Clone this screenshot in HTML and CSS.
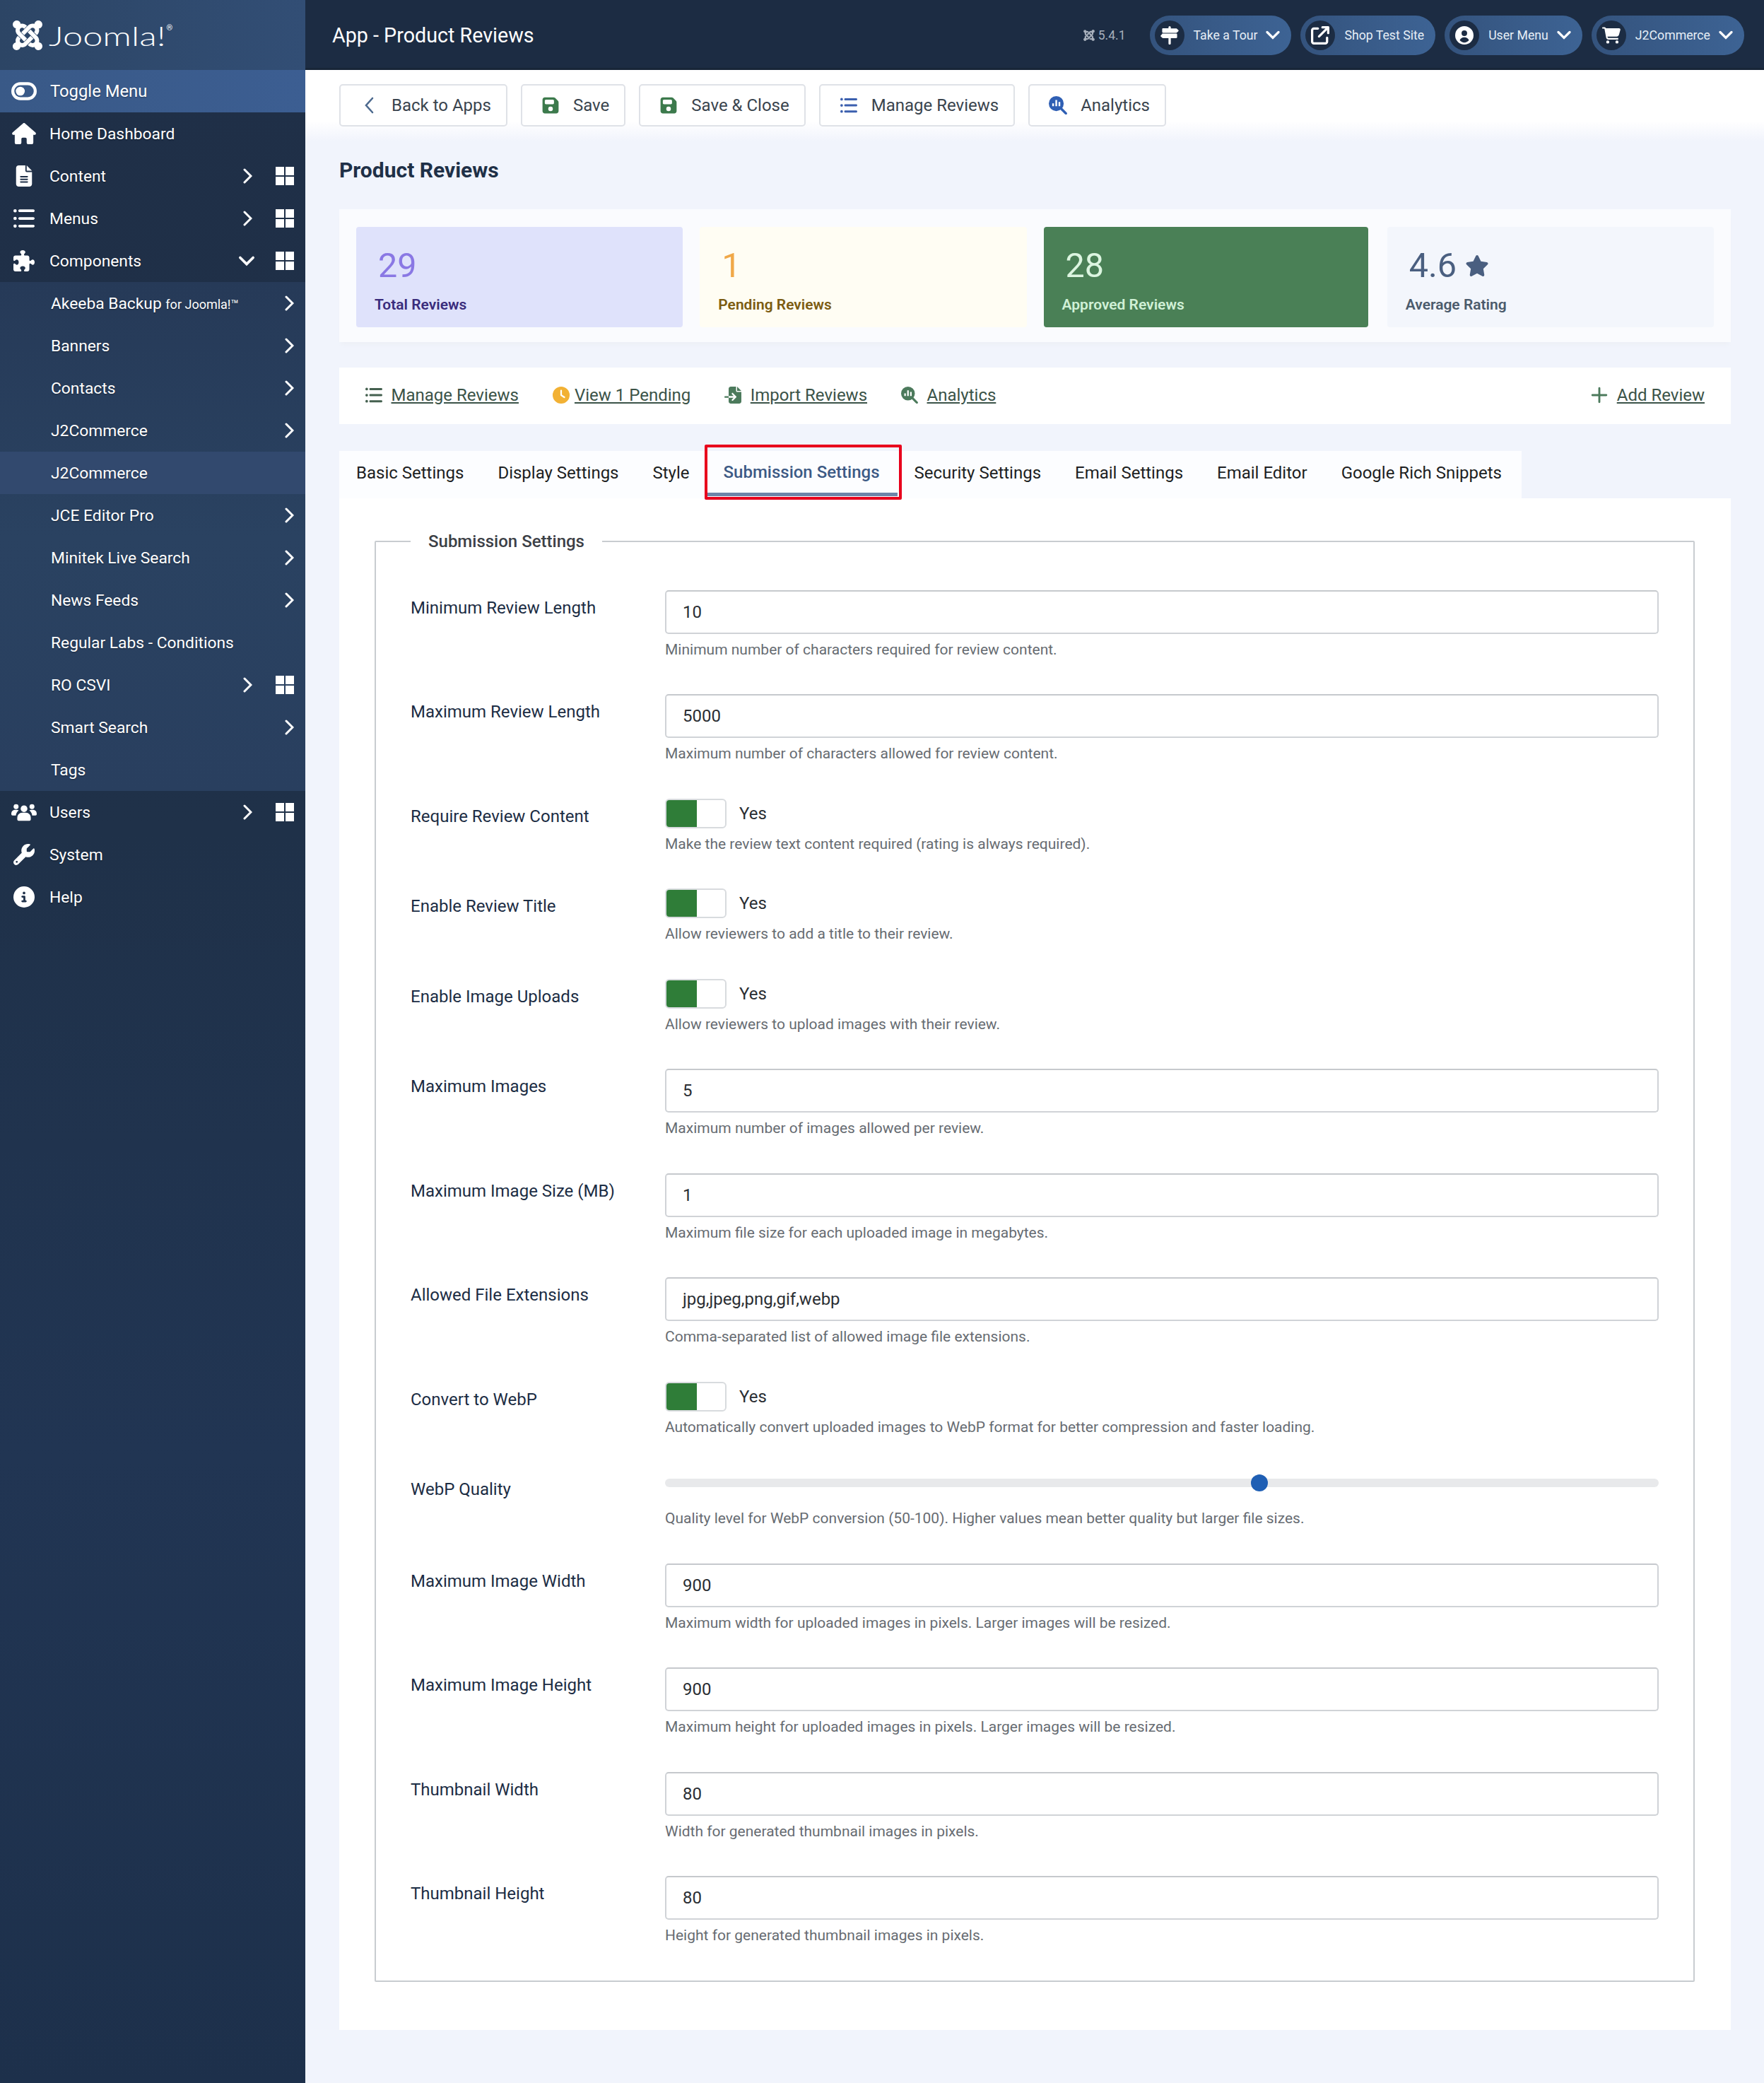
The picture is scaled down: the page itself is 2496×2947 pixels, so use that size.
FILE: index.html
```html
<!DOCTYPE html>
<html lang="en">
<head>
<meta charset="utf-8">
<title>App - Product Reviews</title>
<link rel="stylesheet" href="styles.css">
</head>
<body>
<svg class="sprite" xmlns="http://www.w3.org/2000/svg">
  <symbol id="joomla" viewBox="0 0 448 512"><path d="M.6 92.1C.6 58.8 27.4 32 60.4 32c30 0 54.5 21.9 59.2 50.2 32.6-7.6 67.1.6 96.5 30l-44.3 44.3c-20.5-20.5-42.6-16.3-55.4-3.5-14.3 14.3-14.3 37.9 0 52.2l99.5 99.5-44 44.3c-87.7-87.2-49.7-49.7-99.8-99.7-26.8-26.5-35-64.8-24.8-98.9C20.4 144.6.6 120.7.6 92.1zm129.5 116.4l44.3 44.3c10-10 89.7-89.7 99.7-99.8 14.3-14.3 37.6-14.3 51.9 0 12.8 12.8 17 35-3.5 55.4l44 44.3c31.2-31.2 38.5-67.6 28.9-101.2 29.2-4.1 51.9-29.2 51.9-59.5 0-33.2-26.8-60.1-59.8-60.1-30.3 0-55.4 22.5-59.5 51.6-33.8-9.9-71.7-1.5-98.3 25.1-18.3 19.1-71.1 71.5-99.6 99.9zm266.3 152.2c8.2-32.7-.9-68.5-26.3-93.9-11.8-12.2 5 4.7-99.5-99.7l-44.3 44.3 99.7 99.7c14.3 14.3 14.3 37.6 0 51.9-12.8 12.8-35 17-55.4-3.5l-44 44.3c27.6 30.2 68 38.8 102.7 28 5.5 27.4 29.7 48.1 58.9 48.1 33 0 59.8-26.8 59.8-60.1 0-30.2-22.5-55-51.6-59.1zm-84.3-53.1l-44-44.3c-87 86.4-50.4 50.4-99.7 99.8-14.3 14.3-37.6 14.3-51.9 0-13.1-13.4-16.9-35.3 3.2-55.4l-44-44.3c-30.2 30.2-38 65.2-29.5 98.3-26.7 6-46.8 29.9-46.8 58.2 0 33.2 26.8 60.1 59.8 60.1 28.6 0 52.5-19.8 58.2-46.7 32.7 8.2 68.5-.6 94-26 19.6-19.5 78.2-78.1 100.7-100.7z"/></symbol>
  <symbol id="house" viewBox="0 0 576 512"><path d="M575.8 255.5c0 18-15 32.1-32 32.1h-32l.7 160.2c0 2.7-.2 5.4-.5 8.1V472c0 22.1-17.9 40-40 40H456c-1.1 0-2.2 0-3.3-.1c-1.4 .1-2.8 .1-4.2 .1H416 392c-22.1 0-40-17.9-40-40V448 384c0-17.7-14.3-32-32-32H256c-17.7 0-32 14.3-32 32v64 24c0 22.1-17.9 40-40 40H160 128.1c-1.5 0-3-.1-4.5-.2c-1.2 .1-2.4 .2-3.6 .2H104c-22.1 0-40-17.9-40-40V360c0-.9 0-1.9 .1-2.8V287.6H32c-18 0-32-14-32-32.1c0-9 3-17 10-24L266.4 8c7-7 15-8 22-8s15 2 21 7L564.8 231.5c8 7 12 15 11 24z"/></symbol>
  <symbol id="file" viewBox="0 0 384 512"><path d="M64 0C28.7 0 0 28.7 0 64V448c0 35.3 28.7 64 64 64H320c35.3 0 64-28.7 64-64V160H256c-17.7 0-32-14.3-32-32V0H64zM256 0V128H384L256 0zM112 256H272c8.8 0 16 7.2 16 16s-7.2 16-16 16H112c-8.8 0-16-7.2-16-16s7.2-16 16-16zm0 64H272c8.8 0 16 7.2 16 16s-7.2 16-16 16H112c-8.8 0-16-7.2-16-16s7.2-16 16-16zm0 64H272c8.8 0 16 7.2 16 16s-7.2 16-16 16H112c-8.8 0-16-7.2-16-16s7.2-16 16-16z"/></symbol>
  <symbol id="list" viewBox="0 0 512 512"><path d="M0 72a40 40 0 1 1 80 0 40 40 0 1 1-80 0zM0 256a40 40 0 1 1 80 0 40 40 0 1 1-80 0zM0 440a40 40 0 1 1 80 0 40 40 0 1 1-80 0zM150 40H480c18 0 32 14 32 32s-14 32-32 32H150c-18 0-32-14-32-32s14-32 32-32zM150 224H480c18 0 32 14 32 32s-14 32-32 32H150c-18 0-32-14-32-32s14-32 32-32zM150 408H480c18 0 32 14 32 32s-14 32-32 32H150c-18 0-32-14-32-32s14-32 32-32z"/></symbol>
  <symbol id="puzzle" viewBox="0 0 512 512"><path d="M192 104.8c0-9.2-5.8-17.3-13.2-22.8C167.2 73.3 160 61.3 160 48c0-26.5 28.7-48 64-48s64 21.5 64 48c0 13.3-7.2 25.3-18.8 34c-7.4 5.5-13.2 13.6-13.2 22.8v0c0 12.8 10.4 23.2 23.2 23.2H336c26.5 0 48 21.5 48 48v56.8c0 12.8 10.4 23.2 23.2 23.2v0c9.2 0 17.3-5.8 22.8-13.2c8.7-11.6 20.7-18.8 34-18.8c26.5 0 48 28.7 48 64s-21.5 64-48 64c-13.3 0-25.3-7.2-34-18.8c-5.5-7.4-13.6-13.2-22.8-13.2v0c-12.8 0-23.2 10.4-23.2 23.2V464c0 26.5-21.5 48-48 48H279.2c-12.8 0-23.2-10.4-23.2-23.2v0c0-9.2 5.8-17.3 13.2-22.8c11.6-8.7 18.8-20.7 18.8-34c0-26.5-28.7-48-64-48s-64 21.5-64 48c0 13.3 7.2 25.3 18.8 34c7.4 5.5 13.2 13.6 13.2 22.8v0c0 12.8-10.4 23.2-23.2 23.2H48c-26.5 0-48-21.5-48-48V343.2C0 330.4 10.4 320 23.2 320v0c9.2 0 17.3 5.8 22.8 13.2C54.7 344.8 66.7 352 80 352c26.5 0 48-28.7 48-64s-21.5-64-48-64c-13.3 0-25.3 7.2-34 18.8C40.5 250.2 32.4 256 23.2 256v0C10.4 256 0 245.6 0 232.8V176c0-26.5 21.5-48 48-48H168.8c12.8 0 23.2-10.4 23.2-23.2v0z"/></symbol>
  <symbol id="users" viewBox="0 0 640 512"><circle cx="120" cy="120" r="62"/><circle cx="520" cy="120" r="62"/><circle cx="320" cy="170" r="84"/><path d="M150 400c0-80 60-130 120-130h100c60 0 120 50 120 130v40c0 18-14 32-32 32H182c-18 0-32-14-32-32z"/><path d="M0 300c0-60 40-100 90-100h50c16 0 32 4 46 12-40 30-66 76-70 128H32c-18 0-32-14-32-40zM640 300c0-60-40-100-90-100h-50c-16 0-32 4-46 12 40 30 66 76 70 128h84c18 0 32-14 32-40z"/></symbol>
  <symbol id="wrench" viewBox="0 0 512 512"><path d="M352 320c88.4 0 160-71.6 160-160c0-15.3-2.2-30.1-6.2-44.2c-3.1-10.8-16.4-13.2-24.3-5.3l-76.8 76.8c-3 3-7.1 4.7-11.3 4.7H336c-8.8 0-16-7.2-16-16V118.6c0-4.2 1.7-8.3 4.7-11.3l76.8-76.8c7.9-7.9 5.4-21.2-5.3-24.3C382.1 2.2 367.3 0 352 0C263.6 0 192 71.6 192 160c0 19.1 3.4 37.5 9.5 54.5L19.9 396.1C7.2 408.8 0 426.1 0 444.1C0 481.6 30.4 512 67.9 512c18 0 35.3-7.2 48-19.9L297.5 310.5c17 6.2 35.4 9.5 54.5 9.5zM80 408a24 24 0 1 1 0 48 24 24 0 1 1 0-48z"/></symbol>
  <symbol id="info" viewBox="0 0 512 512"><path d="M256 512A256 256 0 1 0 256 0a256 256 0 1 0 0 512zM216 336h24V272H216c-13.3 0-24-10.7-24-24s10.7-24 24-24h48c13.3 0 24 10.7 24 24v88h8c13.3 0 24 10.7 24 24s-10.7 24-24 24H216c-13.3 0-24-10.7-24-24s10.7-24 24-24zm40-208a32 32 0 1 1 0 64 32 32 0 1 1 0-64z"/></symbol>
  <symbol id="star" viewBox="0 0 576 512"><path d="M316.9 18C311.6 7 300.4 0 288.1 0s-23.4 7-28.8 18L195 150.3 51.4 171.5c-12 1.8-22 10.2-25.7 21.7s-.7 24.2 7.9 32.7L137.8 329 113.2 474.7c-2 12 3 24.2 12.9 31.3s23 8 33.8 2.3l128.3-68.5 128.3 68.5c10.8 5.7 23.9 4.9 33.8-2.3s14.9-19.3 12.9-31.3L438.5 329 542.7 225.9c8.6-8.5 11.7-21.2 7.9-32.7s-13.7-19.9-25.7-21.7L381.2 150.3 316.9 18z"/></symbol>
  <symbol id="save" viewBox="0 0 448 512"><path d="M64 32C28.7 32 0 60.7 0 96V416c0 35.3 28.7 64 64 64H384c35.3 0 64-28.7 64-64V173.3c0-17-6.7-33.3-18.7-45.3L352 50.7C340 38.7 323.7 32 306.7 32H64zm0 96c0-17.7 14.3-32 32-32H288c17.7 0 32 14.3 32 32v64c0 17.7-14.3 32-32 32H96c-17.7 0-32-14.3-32-32V128zM224 288a64 64 0 1 1 0 128 64 64 0 1 1 0-128z"/></symbol>
  <symbol id="chart" viewBox="0 0 512 512"><path fill-rule="evenodd" d="M208 0a208 208 0 1 1 0 416 208 208 0 1 1 0-416zM96 200v80h48v-80zM184 110v170h48V110zM272 160v120h48V160z"/><path d="M350 306l150 150c14 14 14 36 0 50s-36 10-50-4L300 352z"/></symbol>
  <symbol id="clock" viewBox="0 0 512 512"><path d="M256 0a256 256 0 1 1 0 512A256 256 0 1 1 256 0zM232 120V256c0 8 4 15.500 10.700 20l96 64c11 7.400 26 4.400 33.300-6.700s4.400-26-6.700-33.300L280 243V120c0-13.300-10.700-24-24-24s-24 10.700-24 24z"/></symbol>
  <symbol id="import" viewBox="0 0 512 512"><path d="M128 64c0-35 29-64 64-64h160v128c0 18 14 32 32 32h128v288c0 35-29 64-64 64H192c-35 0-64-29-64-64V336h150l-52 52c-9 9-9 25 0 34s25 9 34 0l96-96c9-9 9-25 0-34l-96-96c-9-9-25-9-34 0s-9 25 0 34l52 52H128zM384 0l128 128H384zM24 288h104v48H24c-13 0-24-11-24-24s11-24 24-24z"/></symbol>
  <symbol id="signs" viewBox="0 0 512 512"><path d="M224 32c0-18 14-32 32-32s32 14 32 32v32h150c8 0 16 3 22 9l42 42c6 6 6 16 0 22l-42 42c-6 6-14 9-22 9H72c-13 0-24-11-24-24v-80c0-13 11-24 24-24h152zM40 208h400c13 0 24 11 24 24v80c0 13-11 24-24 24H288v144c0 18-14 32-32 32s-32-14-32-32V336H72c-8 0-16-3-22-9L8 285c-6-6-6-16 0-22l42-46c-3-3-6-9-10-9z"/></symbol>
  <symbol id="external" viewBox="0 0 512 512"><path d="M320 0c-18 0-32 14-32 32s14 32 32 32h82L201 265c-12 12-12 33 0 45s33 12 45 0l202-201v82c0 18 14 32 32 32s32-14 32-32V32c0-18-14-32-32-32zM80 32C36 32 0 68 0 112v320c0 44 36 80 80 80h320c44 0 80-36 80-80V320c0-18-14-32-32-32s-32 14-32 32v112c0 9-7 16-16 16H80c-9 0-16-7-16-16V112c0-9 7-16 16-16h112c18 0 32-14 32-32s-14-32-32-32z"/></symbol>
  <symbol id="user" viewBox="0 0 512 512"><path fill-rule="evenodd" d="M256 0a256 256 0 1 1 0 512A256 256 0 1 1 256 0zM256 120a78 78 0 1 0 0 156 78 78 0 1 0 0-156zM256 310c-62 0-112 34-128 84 32 38 78 62 128 62s96-24 128-62c-16-50-66-84-128-84z"/></symbol>
  <symbol id="cart" viewBox="0 0 576 512"><path d="M0 24C0 11 11 0 24 0h45c22 0 41 12 51 32h411c26 0 46 25 39 51l-41 152c-9 35-40 57-75 57H167l5 29c2 11 12 19 24 19h288c13 0 24 11 24 24s-11 24-24 24H196c-35 0-65-25-71-59L73 53c-1-3-3-5-6-5H24C11 48 0 37 0 24zM128 464a48 48 0 1 1 96 0 48 48 0 1 1-96 0zM416 464a48 48 0 1 1 96 0 48 48 0 1 1-96 0z"/></symbol>
  <symbol id="grid" viewBox="0 0 26 26"><rect width="12" height="12"/><rect x="14" width="12" height="12"/><rect y="14" width="12" height="12"/><rect x="14" y="14" width="12" height="12"/></symbol>
  <symbol id="toggle" viewBox="0 0 34 24"><path fill-rule="evenodd" d="M12 0h10a12 12 0 0 1 0 24H12A12 12 0 0 1 12 0zM12 4a8 8 0 0 0 0 16h10a8 8 0 0 0 0-16z"/><circle cx="12" cy="12" r="6"/></symbol>
  <symbol id="chev-r" viewBox="0 0 14 22"><path d="M3 2l9 9-9 9" fill="none" stroke="currentColor" stroke-width="3" stroke-linecap="round"/></symbol>
  <symbol id="chev-l" viewBox="0 0 14 24"><path d="M12 2L3 12l9 10" fill="none" stroke="currentColor" stroke-width="2.600" stroke-linecap="round"/></symbol>
  <symbol id="chev-d" viewBox="0 0 20 14"><path d="M2 3l8 8 8-8" fill="none" stroke="currentColor" stroke-width="3.200" stroke-linecap="round"/></symbol>
  <symbol id="plus" viewBox="0 0 22 22"><path d="M11 2v18M2 11h18" fill="none" stroke="currentColor" stroke-width="2.600" stroke-linecap="round"/></symbol>
</svg>

<div class="app">
  <aside class="sidebar">
    <div class="brand">
      <svg class="brand-mark"><use href="#joomla"/></svg>
      <span class="brand-name">Joomla!</span><sup class="brand-reg">®</sup>
    </div>
    <nav class="nav">
      <a class="nav-item nav-toggle"><svg class="nav-icon"><use href="#toggle"/></svg><span>Toggle Menu</span></a>
      <a class="nav-item"><svg class="nav-icon"><use href="#house"/></svg><span>Home Dashboard</span></a>
      <a class="nav-item"><svg class="nav-icon"><use href="#file"/></svg><span>Content</span><svg class="chev"><use href="#chev-r"/></svg><svg class="grid"><use href="#grid"/></svg></a>
      <a class="nav-item"><svg class="nav-icon"><use href="#list"/></svg><span>Menus</span><svg class="chev"><use href="#chev-r"/></svg><svg class="grid"><use href="#grid"/></svg></a>
      <a class="nav-item"><svg class="nav-icon"><use href="#puzzle"/></svg><span>Components</span><svg class="chev-down"><use href="#chev-d"/></svg><svg class="grid"><use href="#grid"/></svg></a>
      <div class="subnav">
        <a class="sub-item"><span>Akeeba Backup <small class="tiny">for Joomla!™</small></span><svg class="chev"><use href="#chev-r"/></svg></a>
        <a class="sub-item"><span>Banners</span><svg class="chev"><use href="#chev-r"/></svg></a>
        <a class="sub-item"><span>Contacts</span><svg class="chev"><use href="#chev-r"/></svg></a>
        <a class="sub-item"><span>J2Commerce</span><svg class="chev"><use href="#chev-r"/></svg></a>
        <a class="sub-item sub-active"><span>J2Commerce</span></a>
        <a class="sub-item"><span>JCE Editor Pro</span><svg class="chev"><use href="#chev-r"/></svg></a>
        <a class="sub-item"><span>Minitek Live Search</span><svg class="chev"><use href="#chev-r"/></svg></a>
        <a class="sub-item"><span>News Feeds</span><svg class="chev"><use href="#chev-r"/></svg></a>
        <a class="sub-item"><span>Regular Labs - Conditions</span></a>
        <a class="sub-item"><span>RO CSVI</span><svg class="chev"><use href="#chev-r"/></svg><svg class="grid"><use href="#grid"/></svg></a>
        <a class="sub-item"><span>Smart Search</span><svg class="chev"><use href="#chev-r"/></svg></a>
        <a class="sub-item"><span>Tags</span></a>
      </div>
      <a class="nav-item"><svg class="nav-icon"><use href="#users"/></svg><span>Users</span><svg class="chev"><use href="#chev-r"/></svg><svg class="grid"><use href="#grid"/></svg></a>
      <a class="nav-item"><svg class="nav-icon"><use href="#wrench"/></svg><span>System</span></a>
      <a class="nav-item"><svg class="nav-icon"><use href="#info"/></svg><span>Help</span></a>
    </nav>
  </aside>

  <div class="main">
    <header class="topbar">
      <h1 class="page-title">App - Product Reviews</h1>
      <div class="version"><svg class="version-mark"><use href="#joomla"/></svg>5.4.1</div>
      <div class="pills">
        <a class="pill"><span class="pill-icon"><svg><use href="#signs"/></svg></span><span>Take a Tour</span><svg class="pill-chev"><use href="#chev-d"/></svg></a>
        <a class="pill"><span class="pill-icon"><svg><use href="#external"/></svg></span><span>Shop Test Site</span></a>
        <a class="pill"><span class="pill-icon"><svg><use href="#user"/></svg></span><span>User Menu</span><svg class="pill-chev"><use href="#chev-d"/></svg></a>
        <a class="pill"><span class="pill-icon"><svg><use href="#cart"/></svg></span><span>J2Commerce</span><svg class="pill-chev"><use href="#chev-d"/></svg></a>
      </div>
    </header>

    <div class="toolbar">
      <a class="btn"><span class="btn-icon"><svg class="ico-back"><use href="#chev-l"/></svg></span>Back to Apps</a>
      <a class="btn"><span class="btn-icon"><svg class="ico-save"><use href="#save"/></svg></span>Save</a>
      <a class="btn"><span class="btn-icon"><svg class="ico-save"><use href="#save"/></svg></span>Save &amp; Close</a>
      <a class="btn"><span class="btn-icon"><svg class="ico-list"><use href="#list"/></svg></span>Manage Reviews</a>
      <a class="btn"><span class="btn-icon"><svg class="ico-chart"><use href="#chart"/></svg></span>Analytics</a>
    </div>

    <main class="content">
      <h2 class="section-title">Product Reviews</h2>

      <section class="stats">
        <div class="stat stat-total"><div class="stat-num">29</div><div class="stat-label">Total Reviews</div></div>
        <div class="stat stat-pending"><div class="stat-num">1</div><div class="stat-label">Pending Reviews</div></div>
        <div class="stat stat-approved"><div class="stat-num">28</div><div class="stat-label">Approved Reviews</div></div>
        <div class="stat stat-rating"><div class="stat-num">4.6 <svg class="stat-star"><use href="#star"/></svg></div><div class="stat-label">Average Rating</div></div>
      </section>

      <div class="linkbar">
        <a class="link"><svg class="link-ico ico-slate"><use href="#list"/></svg><u>Manage Reviews</u></a>
        <a class="link link-tight"><svg class="link-ico ico-amber"><use href="#clock"/></svg><u>View 1 Pending</u></a>
        <a class="link"><svg class="link-ico ico-green"><use href="#import"/></svg><u>Import Reviews</u></a>
        <a class="link"><svg class="link-ico ico-green"><use href="#chart"/></svg><u>Analytics</u></a>
        <a class="link link-add"><svg class="link-ico ico-green"><use href="#plus"/></svg><u>Add Review</u></a>
      </div>

      <div class="tabs">
        <a class="tab">Basic Settings</a>
        <a class="tab">Display Settings</a>
        <a class="tab">Style</a>
        <a class="tab tab-active">Submission Settings</a>
        <a class="tab">Security Settings</a>
        <a class="tab">Email Settings</a>
        <a class="tab">Email Editor</a>
        <a class="tab">Google Rich Snippets</a>
      </div>

      <section class="panel">
        <fieldset class="group">
          <legend class="group-title">Submission Settings</legend>

          <div class="row"><div class="row-label">Minimum Review Length</div><div class="row-field"><div class="input">10</div><div class="help">Minimum number of characters required for review content.</div></div></div>
          <div class="row"><div class="row-label">Maximum Review Length</div><div class="row-field"><div class="input">5000</div><div class="help">Maximum number of characters allowed for review content.</div></div></div>
          <div class="row"><div class="row-label">Require Review Content</div><div class="row-field"><div class="switch-wrap"><span class="switch"><span class="switch-on"></span></span>Yes</div><div class="help">Make the review text content required (rating is always required).</div></div></div>
          <div class="row"><div class="row-label">Enable Review Title</div><div class="row-field"><div class="switch-wrap"><span class="switch"><span class="switch-on"></span></span>Yes</div><div class="help">Allow reviewers to add a title to their review.</div></div></div>
          <div class="row"><div class="row-label">Enable Image Uploads</div><div class="row-field"><div class="switch-wrap"><span class="switch"><span class="switch-on"></span></span>Yes</div><div class="help">Allow reviewers to upload images with their review.</div></div></div>
          <div class="row"><div class="row-label">Maximum Images</div><div class="row-field"><div class="input">5</div><div class="help">Maximum number of images allowed per review.</div></div></div>
          <div class="row"><div class="row-label">Maximum Image Size (MB)</div><div class="row-field"><div class="input">1</div><div class="help">Maximum file size for each uploaded image in megabytes.</div></div></div>
          <div class="row"><div class="row-label">Allowed File Extensions</div><div class="row-field"><div class="input">jpg,jpeg,png,gif,webp</div><div class="help">Comma-separated list of allowed image file extensions.</div></div></div>
          <div class="row"><div class="row-label">Convert to WebP</div><div class="row-field"><div class="switch-wrap"><span class="switch"><span class="switch-on"></span></span>Yes</div><div class="help">Automatically convert uploaded images to WebP format for better compression and faster loading.</div></div></div>
          <div class="row"><div class="row-label">WebP Quality</div><div class="row-field"><div class="slider"><div class="slider-track"><span class="slider-pos" style="width:60%"></span><span class="slider-thumb"></span></div></div><div class="help">Quality level for WebP conversion (50-100). Higher values mean better quality but larger file sizes.</div></div></div>
          <div class="row"><div class="row-label">Maximum Image Width</div><div class="row-field"><div class="input">900</div><div class="help">Maximum width for uploaded images in pixels. Larger images will be resized.</div></div></div>
          <div class="row"><div class="row-label">Maximum Image Height</div><div class="row-field"><div class="input">900</div><div class="help">Maximum height for uploaded images in pixels. Larger images will be resized.</div></div></div>
          <div class="row"><div class="row-label">Thumbnail Width</div><div class="row-field"><div class="input">80</div><div class="help">Width for generated thumbnail images in pixels.</div></div></div>
          <div class="row"><div class="row-label">Thumbnail Height</div><div class="row-field"><div class="input">80</div><div class="help">Height for generated thumbnail images in pixels.</div></div></div>
        </fieldset>
      </section>
    </main>
  </div>
</div>
</body>
</html>
```

FILE: styles.css
```css
* { box-sizing: border-box; }
html, body { margin: 0; padding: 0; }
body {
  font-family: Roboto, "Liberation Sans", sans-serif;
  font-size: 24px;
  color: #1c2d44;
  background: #f1f4fc;
  overflow: hidden;
}
.sprite { position: absolute; width: 0; height: 0; }
a { color: inherit; text-decoration: none; }
svg { fill: currentColor; display: block; }

.app { display: flex; height: 2947px; }

/* Sidebar */
.sidebar {
  width: 432px;
  flex: none;
  color: #fff;
  background: linear-gradient(180deg, #1f2f47 0, #1f3149 40%, #213553 70%, #1d304b 100%);
}
.brand {
  height: 99px;
  display: flex;
  align-items: center;
  padding-left: 16px;
  background: linear-gradient(90deg, #2c4565, #324e75);
}
.brand-mark { width: 46px; height: 48px; }
.brand-name {
  display: inline-block;
  font-family: Lato, sans-serif;
  font-weight: 300;
  font-size: 38px;
  line-height: 1;
  margin: 0 41px 0 7px;
  transform: scaleX(1.33);
  transform-origin: left center;
}
.brand-reg { font-size: 11px; align-self: flex-start; margin: 34px 0 0 1px; line-height: 1; }
.nav-item, .sub-item {
  height: 60px;
  display: flex;
  align-items: center;
  padding-right: 16px;
  font-size: 22.8px;
  text-shadow: 0 1px 2px rgba(0,0,0,.35);
}
.nav-item { padding-left: 16px; }
.sub-item { padding-left: 72px; }
.nav-toggle { background: linear-gradient(90deg, #395987, #3c5e92); font-size: 23.8px; }
.nav-toggle .nav-icon { margin-right: 19px; }
.nav-icon { width: 36px; height: 30px; margin-right: 18px; flex: none; }
.subnav { background: linear-gradient(180deg, #263a58, #2a4261 50%, #293f5f); }
.sub-active { background: #32496e; }
.tiny { font-size: 18px; }
.chev { width: 14px; height: 22px; margin-left: auto; flex: none; }
.chev-down { width: 24px; height: 16px; margin-left: auto; margin-right: -4px; flex: none; }
.grid { width: 26px; height: 26px; margin-left: 33px; flex: none; }

/* Top bar */
.main { flex: 1; min-width: 0; display: flex; flex-direction: column; }
.topbar {
  height: 99px;
  flex: none;
  display: flex;
  align-items: center;
  padding: 0 28px 0 38px;
  background: #1c2c43;
  box-shadow: inset 0 -3px 0 #182638;
  color: #fff;
}
.page-title { margin: 0; font-size: 28.7px; font-weight: 400; }
.version {
  margin-left: auto;
  display: flex;
  align-items: center;
  gap: 5px;
  font-size: 17.5px;
  color: #a8b0bc;
}
.version-mark { width: 16px; height: 18px; }
.pills { display: flex; gap: 13px; margin-left: 34px; }
.pill {
  height: 56px;
  border-radius: 28px;
  padding: 0 16px 0 7px;
  display: flex;
  align-items: center;
  background: linear-gradient(90deg, #34537d, #3d6394);
  color: #e6eef6;
  font-size: 17.7px;
  white-space: nowrap;
}
.pill-icon {
  width: 42px;
  height: 42px;
  border-radius: 50%;
  background: #1c2c43;
  color: #fff;
  margin-right: 13px;
  display: flex;
  align-items: center;
  justify-content: center;
  flex: none;
}
.pill-icon svg { width: 26px; height: 26px; }
.pill-chev { width: 20px; height: 15px; margin-left: 12px; color: #fff; }

/* Toolbar */
.toolbar {
  height: 100px;
  flex: none;
  display: flex;
  gap: 19px;
  padding: 20px 48px 0;
  background: linear-gradient(180deg, #fff 72%, #f1f4fc);
}
.btn {
  height: 60px;
  display: flex;
  align-items: center;
  padding: 0 21px 0 24px;
  border: 2px solid #dfe2e7;
  border-radius: 5px;
  background: #fff;
  color: #3a444e;
  font-size: 24px;
  white-space: nowrap;
}
.btn-icon { width: 32px; margin-right: 16px; display: flex; justify-content: center; flex: none; }
.ico-back { width: 14px; height: 24px; color: #4d6a8f; }
.ico-save { width: 24px; height: 26px; color: #3c7a4c; }
.ico-list { width: 26px; height: 24px; color: #3b5fae; }
.ico-chart { width: 26px; height: 26px; color: #2f5fb4; }

/* Content */
.content { flex: 1; padding: 0 47px 0 48px; display: flex; flex-direction: column; }
.section-title { margin: 23px 0 36px; font-size: 30px; line-height: 38px; font-weight: 700; color: #1f3047; }

.stats {
  display: grid;
  grid-template-columns: repeat(4, 1fr);
  gap: 24px;
  padding: 25px 24px 21px;
  background: #fafbfe;
  box-shadow: 0 6px 6px -3px #eceff5;
}
.stat { height: 142px; padding: 23px 26px 0; border-radius: 4px; }
.stat-num { font-size: 48.5px; line-height: 64px; font-weight: 400; padding-left: 5px; display: flex; align-items: center; gap: 12px; }
.stat-label { font-size: 21px; line-height: 30px; font-weight: 600; margin-top: 8px; }
.stat-star { width: 34px; height: 30px; }
.stat-total { background: #dfe2fb; color: #8a78e4; }
.stat-total .stat-label { color: #3a2c7c; }
.stat-pending { background: #fffdf3; color: #f0a848; }
.stat-pending .stat-label { color: #7c5c12; }
.stat-approved { background: #4a8056; color: #dcf5e0; margin-right: 3px; }
.stat-approved .stat-label { color: #d0f0d6; }
.stat-rating { background: #f3f6fc; color: #4a5f80; }
.stat-rating .stat-label { color: #4b5b6c; }

.linkbar {
  margin-top: 36px;
  height: 80px;
  flex: none;
  display: flex;
  align-items: center;
  gap: 48px;
  padding: 0 37px 3px;
  background: #fff;
}
.link { display: flex; align-items: center; gap: 12.5px; color: #3b5348; font-size: 24px; }
.link-tight { gap: 7px; }
.link-add { margin-left: auto; }
.link-ico { width: 24px; height: 24px; flex: none; }
.ico-slate { color: #44604f; }
.ico-amber { color: #f2b134; }
.ico-green { color: #4c7a5c; }

.tabs {
  margin-top: 38px;
  height: 67px;
  flex: none;
  display: flex;
  width: fit-content;
  padding-right: 4px;
  background: #fcfdff;
}
.tab {
  position: relative;
  padding: 0 24px;
  display: flex;
  align-items: center;
  height: 62px;
  white-space: nowrap;
  color: #1d1f22;
  font-size: 24px;
}
.tab-active { color: #3d5a85; font-weight: 500; height: 64px; padding-right: 25px; border-bottom: 5px solid #6d84a8; }
.tab-active::after {
  content: "";
  position: absolute;
  left: -3px;
  right: -6px;
  top: -9px;
  bottom: -10px;
  border: 4px solid #e8001c;
  border-radius: 2px;
}

.panel { height: 2167px; padding: 43px 51px 0 50px; background: #fff; }
.group { margin: 0; min-width: 0; padding: 0 49px 0.5px; border: 2px solid #c8ccd0; border-radius: 2px; }
.group-title {
  padding: 0 25px;
  font-size: 24px;
  line-height: 36px;
  font-weight: 500;
  color: #3c4046;
}
.row { display: grid; grid-template-columns: 360px 1fr; }
.group .row:first-of-type { margin-top: 50.5px; }
.row-label { padding-top: 7px; line-height: 36px; font-size: 24px; color: #1c2d44; }
.input {
  height: 62px;
  padding: 0 23px;
  display: flex;
  align-items: center;
  border: 2px solid #d0d3d7;
  border-top-color: #c6c9cd;
  border-radius: 5px;
  background: #fff;
  color: #2a2e33;
  font-size: 24px;
}
.help { margin-top: 4px; margin-bottom: 45.5px; line-height: 36px; font-size: 21px; color: #676c72; }
.switch-wrap { height: 42px; display: flex; align-items: center; gap: 18px; color: #2a2e33; font-size: 24px; }
.switch {
  width: 87px;
  height: 42px;
  display: block;
  flex: none;
  border: 2px solid #d8dbde;
  border-radius: 6px;
  background: #fff;
  overflow: hidden;
}
.switch-on { display: block; width: 45px; margin: -2px 0 0 -2px; height: 42px; background: #2f7d38; }
.slider { height: 44px; display: flex; align-items: flex-start; padding-top: 10px; }
.slider-track {
  width: 100%;
  height: 12px;
  display: flex;
  align-items: center;
  padding-right: 24px;
  border-radius: 6px;
  background: #e8e9eb;
}
.slider-pos { display: block; flex: none; }
.slider-thumb { width: 24px; height: 24px; flex: none; border-radius: 50%; background: #1f5fb4; }
```
